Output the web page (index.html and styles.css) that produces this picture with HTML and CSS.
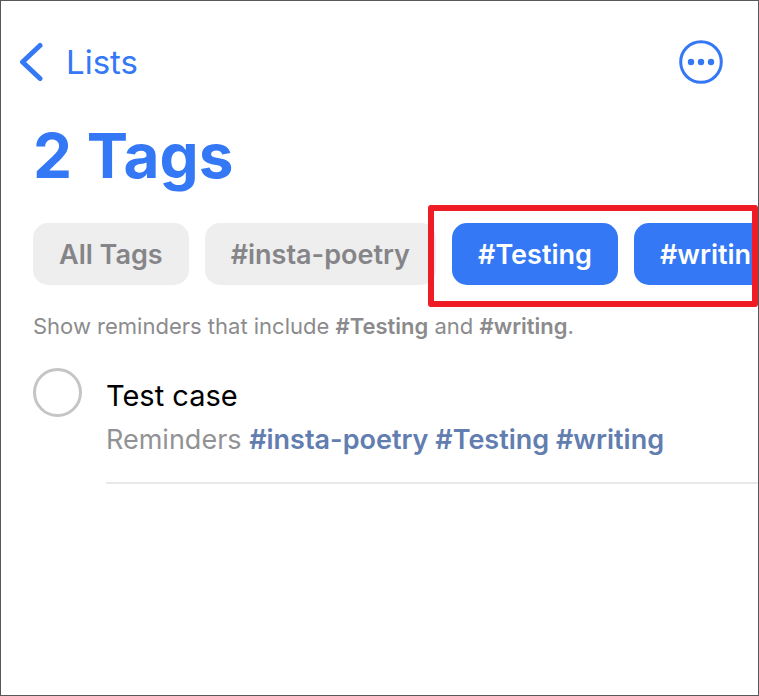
FILE: index.html
```html
<!DOCTYPE html>
<html lang="en">
<head>
    <meta charset="UTF-8">
    <meta name="viewport" content="width=device-width, initial-scale=1.0">
    <title>2 Tags</title>
    <link rel="stylesheet" href="styles.css">
</head>
<body>
    <div class="screen">
        <header class="nav">
            <a class="back" href="#">
                <svg width="24" height="40" viewBox="0 0 24 40" fill="none" stroke="currentColor" stroke-width="5" stroke-linecap="round" stroke-linejoin="round" aria-hidden="true">
                    <path d="M21 3.500 3.500 20 21 36.500"/>
                </svg>
                <span>Lists</span>
            </a>
            <button class="more" type="button" aria-label="More options">
                <svg width="44" height="44" viewBox="0 0 44 44" aria-hidden="true">
                    <circle cx="22" cy="22" r="20.300" fill="none" stroke="currentColor" stroke-width="3"/>
                    <circle cx="12" cy="22" r="3.200" fill="currentColor"/>
                    <circle cx="22" cy="22" r="3.200" fill="currentColor"/>
                    <circle cx="32" cy="22" r="3.200" fill="currentColor"/>
                </svg>
            </button>
        </header>

        <main>
            <h1>2 Tags</h1>

            <div class="tags">
                <button class="tag" type="button">All Tags</button>
                <button class="tag" type="button">#insta-poetry</button>
                <div class="selected">
                    <div class="selected-tags">
                        <button class="tag active" type="button">#Testing</button>
                        <button class="tag active" type="button">#writing</button>
                    </div>
                </div>
            </div>

            <p class="summary">Show reminders that include <b>#Testing</b> and <b>#writing</b>.</p>

            <ul class="reminders">
                <li class="reminder">
                    <input type="checkbox" id="reminder1">
                    <div class="details">
                        <label for="reminder1">Test case</label>
                        <p>Reminders <b>#insta-poetry #Testing #writing</b></p>
                    </div>
                </li>
            </ul>
        </main>
    </div>
</body>
</html>
```

FILE: styles.css
```css
* {
    box-sizing: border-box;
}

body {
    margin: 0;
    font-family: Inter, "Liberation Sans", sans-serif;
    background-color: #fff;
}

.screen {
    min-height: 100vh;
    border: 1px solid #58585a;
    overflow: hidden;
}

.nav {
    display: flex;
    align-items: center;
    justify-content: space-between;
    padding: 39px 35px 0 18px;
    color: #3478f6;
}

.back {
    display: flex;
    align-items: center;
    gap: 23px;
    font-size: 33px;
    line-height: 44px;
    color: inherit;
    text-decoration: none;
}

.more {
    padding: 0;
    border: none;
    background: none;
    color: inherit;
    cursor: pointer;
}

.more svg {
    display: block;
}

h1 {
    margin: 32px 32px 0;
    font-size: 62px;
    line-height: 80px;
    font-weight: 700;
    color: #3478f6;
}

.tags {
    display: flex;
    gap: 16px;
    margin-top: 27px;
    padding-left: 32px;
}

.tag {
    flex: none;
    height: 62px;
    padding: 0 26px;
    border: none;
    border-radius: 15px;
    font-family: inherit;
    font-size: 27px;
    font-weight: 600;
    background-color: #eee;
    color: #858589;
    cursor: pointer;
}

.tag.active {
    background-color: #3478f6;
    color: #fff;
}

.selected {
    position: relative;
    flex: 1;
    min-width: 0;
}

.selected-tags {
    display: flex;
    gap: 16px;
    overflow: hidden;
}

/* red frame around the selected tags */
.selected::after {
    content: "";
    position: absolute;
    inset: -18px 0 -22px -24px;
    border: 6px solid #ee1c25;
    border-radius: 3px;
    pointer-events: none;
}

.summary {
    margin: 27px 32px 0;
    font-size: 22px;
    line-height: 28px;
    color: #8b8b8d;
}

.summary b,
.details b {
    font-weight: 600;
}

.reminders {
    margin: 28px 0 0;
    padding: 0 0 0 32px;
    list-style: none;
}

.reminder {
    display: flex;
    gap: 24px;
}

.reminder input {
    flex: none;
    appearance: none;
    width: 49px;
    height: 49px;
    margin: 0;
    border: 3px solid #c5c5c5;
    border-radius: 50%;
}

.reminder input:checked {
    background-color: #3478f6;
    border-color: #3478f6;
}

.details {
    flex: 1;
    padding: 8px 0 24px;
    border-bottom: 2px solid #e8e8e8;
}

.details label {
    display: block;
    font-size: 29px;
    line-height: 40px;
    color: #000;
}

.details p {
    margin: 6px 0 0;
    font-size: 27px;
    line-height: 36px;
    color: #929294;
}

.details b {
    color: #627daf;
}
```
